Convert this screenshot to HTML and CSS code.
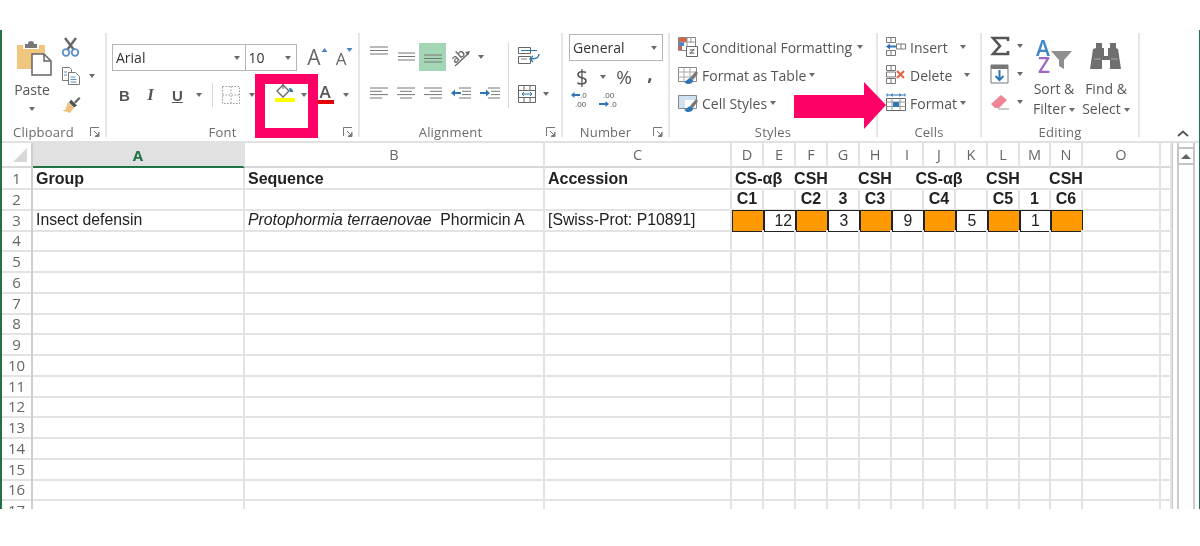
FILE: index.html
```html
<!DOCTYPE html>
<html lang="en">
<head>
<meta charset="utf-8">
<title>Excel ribbon</title>
<link rel="stylesheet" href="styles.css">
</head>
<body>
<div class="window">
  <div class="ribbon">

    <section class="group g-clipboard">
      <div class="body">
        <div class="paste">
          <svg class="ic36" viewBox="0 0 36 36"><path d="M0 5h6v4h16V5h6v24H0z" fill="#f0c67f"/><path d="M8 4h3a3 3 0 0 1 6 0h3v4H8z" fill="#777"/><path d="M15 14h12l7 7v14H15z" fill="#fff" stroke="#666" stroke-width="1.5"/><path d="M27 14v7h7" fill="none" stroke="#666" stroke-width="1.5"/></svg>
          <span class="paste-text">Paste</span>
          <span class="caret"></span>
        </div>
        <div class="tools">
          <div class="tool"><svg class="ic20" viewBox="0 0 20 20"><path d="M4 1l9 12M15 1L6 13" stroke="#666" stroke-width="2.4" fill="none"/><circle cx="5" cy="15.500" r="3.300" fill="none" stroke="#5b8fc7" stroke-width="1.800"/><circle cx="14" cy="15.500" r="3.300" fill="none" stroke="#5b8fc7" stroke-width="1.800"/></svg></div>
          <div class="tool"><svg class="ic20" viewBox="0 0 20 20"><path d="M1.500 1.500h7l2 2v11h-9z" fill="#fff" stroke="#777"/><path d="M7.500 6.500h7l4 4v8h-11z" fill="#fff" stroke="#777"/><path d="M3 6h3M3 9h3M9.500 11h5M9.500 13.500h6M9.500 16h6" stroke="#5b8fc7"/></svg><span class="caret tool-caret"></span></div>
          <div class="tool"><svg class="ic20" viewBox="0 0 20 20"><path d="M13 7l5-5 1.500 1.500-5 5z" fill="#666"/><path d="M10 4.500l6 6-3 2-5-5z" fill="#555"/><path d="M7 7l6 6-4 5-8-2.500c3 0 4-1 4-2.500z" fill="#eec27e"/></svg></div>
        </div>
      </div>
      <div class="label"><span class="label-text">Clipboard</span><svg class="launcher" viewBox="0 0 10 10"><path d="M.5 9V.5H9M9 5v4.500H5M4 4l4.500 4.500M8.500 5.500v3h-3" fill="none" stroke="#777"/></svg></div>
    </section>

    <section class="group g-font">
      <div class="body column">
        <div class="font-row1">
          <div class="combo combo-font"><span>Arial</span><span class="caret"></span></div>
          <div class="combo combo-size"><span>10</span><span class="caret"></span></div>
          <div class="slot s27 grow"><span class="big-a">A</span><svg class="tri" viewBox="0 0 6 4"><path d="M0 4l3-4 3 4z" fill="#4a86c5"/></svg></div>
          <div class="slot s27 grow"><span class="small-a">A</span><svg class="tri" viewBox="0 0 6 4"><path d="M0 0l3 4 3-4z" fill="#4a86c5"/></svg></div>
        </div>
        <div class="font-row2">
          <div class="slot s25 fmt bold">B</div>
          <div class="slot s27 fmt ital">I</div>
          <div class="slot s27 fmt under">U</div>
          <div class="slot s16"><span class="caret"></span></div>
          <div class="slot s10"><span class="vsep"></span></div>
          <div class="slot s28"><svg class="ic18" viewBox="0 0 18 18"><path d="M.5.500h17v17H.5zM9 .5v17M.5 9h17" fill="none" stroke="#999" stroke-dasharray="1.500 1.500"/></svg></div>
          <div class="slot s13"><span class="caret"></span></div>
          <div class="slot s14"></div>
          <div class="slot s26 fill-slot"><svg class="ic20" viewBox="0 0 20 20"><path d="M8 2l-6 6 6 6 6-6z" fill="#fff" stroke="#666" stroke-width="1.300"/><path d="M8 1v5" stroke="#666"/><path d="M14 5c3 0 4 2 4 4h-3z" fill="#2f75b5"/><rect x="0" y="15" width="20" height="4" fill="#ffff00"/></svg></div>
          <div class="slot s12"><span class="caret"></span></div>
          <div class="slot s30 font-color"><span class="color-a">A</span><span class="color-bar"></span></div>
          <div class="slot s12"><span class="caret"></span></div>
        </div>
      </div>
      <div class="label"><span class="label-text">Font</span><svg class="launcher" viewBox="0 0 10 10"><path d="M.5 9V.5H9M9 5v4.500H5M4 4l4.500 4.500M8.500 5.500v3h-3" fill="none" stroke="#777"/></svg></div>
    </section>

    <section class="group g-align">
      <div class="body">
        <div class="align-left">
          <div class="align-row1">
            <div class="slot s27 v-top"><svg class="ic18w" viewBox="0 0 18 10"><path d="M0 1h18M0 4.500h18M0 8h18" stroke="#777"/></svg></div>
            <div class="slot s27 v-mid"><svg class="ic18w" viewBox="0 0 18 10"><path d="M1 1h17M1 4.500h17M1 8h17" stroke="#777"/></svg></div>
            <div class="slot s27 active v-bot"><svg class="ic18w" viewBox="0 0 18 10"><path d="M0 1h18M0 4.500h18M0 8h18" stroke="#777"/></svg></div>
            <div class="slot s30"><svg class="ic20 orient" viewBox="0 0 20 20"><path d="M4 19L18 6" stroke="#666" stroke-width="1.300"/><path d="M19 4l-5 1 3 3.500z" fill="#666"/><text x="0" y="14" class="ab" transform="rotate(-42 6 10)">ab</text></svg></div>
            <div class="slot s10"><span class="caret"></span></div>
          </div>
          <div class="align-row2">
            <div class="slot s27"><svg class="ic18w" viewBox="0 0 18 12"><path d="M0 1h18M0 4.300h12M0 7.600h18M0 11h12" stroke="#777"/></svg></div>
            <div class="slot s27"><svg class="ic18w" viewBox="0 0 18 12"><path d="M0 1h18M3 4.300h12M0 7.600h18M3 11h12" stroke="#777"/></svg></div>
            <div class="slot s27"><svg class="ic18w" viewBox="0 0 18 12"><path d="M0 1h18M6 4.300h12M0 7.600h18M6 11h12" stroke="#777"/></svg></div>
            <div class="slot s30"><svg class="ic20w" viewBox="0 0 20 12"><path d="M8 1h12M11 4.300h9M11 7.600h9M8 11h12" stroke="#777"/><path d="M0 6l4-3.500v2.500h6v2H4v2.500z" fill="#2f75b5"/></svg></div>
            <div class="slot s28"><svg class="ic20w" viewBox="0 0 20 12"><path d="M8 1h12M11 4.300h9M11 7.600h9M8 11h12" stroke="#777"/><path d="M10 6L6 2.500V5H0v2h6v2.500z" fill="#2f75b5"/></svg></div>
          </div>
        </div>
        <span class="vsep tall"></span>
        <div class="align-right">
          <svg class="ic20 wrap" viewBox="0 0 24 20"><path d="M.5.500h12v6H.5zM.5 9.500h12v7H.5z" fill="#fff" stroke="#666"/><path d="M3 3.500h16" stroke="#2f75b5"/><path d="M3 12h6" stroke="#777"/><path d="M21 7c0 4-3 5-8 5M15 9l-3 3 3 3" fill="none" stroke="#2f75b5" stroke-width="1.300"/></svg>
          <div class="merge"><svg class="ic18" viewBox="0 0 18 18"><path d="M.5.500h17v17H.5zM.5 5.500h17M.5 12.500h17M6 .5v5M12 .5v5M6 12.500v5M12 12.500v5" fill="#fff" stroke="#666"/><path d="M4 9h10M4 9l2-2M4 9l2 2M14 9l-2-2M14 9l-2 2" fill="none" stroke="#2f75b5"/></svg><span class="caret"></span></div>
        </div>
      </div>
      <div class="label"><span class="label-text">Alignment</span><svg class="launcher" viewBox="0 0 10 10"><path d="M.5 9V.5H9M9 5v4.500H5M4 4l4.500 4.500M8.500 5.500v3h-3" fill="none" stroke="#777"/></svg></div>
    </section>

    <section class="group g-number">
      <div class="body column">
        <div class="combo combo-num"><span>General</span><span class="caret"></span></div>
        <div class="num-row">
          <div class="slot s26 num-sym dollar">$</div>
          <div class="slot s15"><span class="caret"></span></div>
          <div class="slot s28 num-sym percent">%</div>
          <div class="slot s24 num-sym comma">,</div>
        </div>
        <div class="num-row2">
          <svg class="dec" viewBox="0 0 20 18"><text x="9" y="7" class="dec-t">.0</text><text x="4" y="16" class="dec-t">.00</text><path d="M0 4l3.500-3v2H9v2H3.500v2z" fill="#2f75b5"/></svg>
          <svg class="dec" viewBox="0 0 20 18"><text x="5" y="7" class="dec-t">.00</text><text x="12" y="16" class="dec-t">.0</text><path d="M11 13L7.500 10v2H1v2h6.500v2z" fill="#2f75b5"/></svg>
        </div>
      </div>
      <div class="label"><span class="label-text">Number</span><svg class="launcher" viewBox="0 0 10 10"><path d="M.5 9V.5H9M9 5v4.500H5M4 4l4.500 4.500M8.500 5.500v3h-3" fill="none" stroke="#777"/></svg></div>
    </section>

    <section class="group g-styles">
      <div class="body column list">
        <div class="item"><svg class="ic20" viewBox="0 0 20 20"><path d="M.5.500h17v13H.5z" fill="#fff" stroke="#888"/><path d="M1 1h8v4H1z" fill="#d9603f"/><path d="M1 5h5v4H1z" fill="#4a86c5"/><path d="M1 9h3v4H1z" fill="#d9603f"/><path d="M9 1v12M13 1v5M1 5h16" stroke="#999"/><path d="M8.500 9.500h11v10h-11z" fill="#fff" stroke="#666"/><path d="M11.500 13h5M11.500 16h5M16 12l-4 5" stroke="#555"/></svg><span>Conditional Formatting</span><span class="caret ml5"></span></div>
        <div class="item"><svg class="ic20" viewBox="0 0 20 20"><path d="M.5 2.500h18v14H.5z" fill="#fff" stroke="#888"/><path d="M.5 7h18M.5 12h18M6 2.500v14M12 2.500v14" stroke="#aaa"/><path d="M18 6l-6 7 3 2 5-7z" fill="#777"/><path d="M12 13c-3 1-3 3-6 4l3 2c4 0 6-1 6-4z" fill="#2f75b5"/></svg><span>Format as Table</span><span class="caret ml3"></span></div>
        <div class="item"><svg class="ic20" viewBox="0 0 20 20"><path d="M.5 2.500h18v13H.5z" fill="#fff" stroke="#888"/><path d="M1 3h17v4H1z" fill="#cfe0f0"/><path d="M1 7h6v8H1z" fill="#cfe0f0"/><path d="M18 6l-6 7 3 2 5-7z" fill="#777"/><path d="M12 13c-3 1-3 3-6 4l3 2c4 0 6-1 6-4z" fill="#2f75b5"/></svg><span>Cell Styles</span><span class="caret ml3"></span></div>
      </div>
      <div class="label label-plain"><span class="label-text">Styles</span></div>
    </section>

    <section class="group g-cells">
      <div class="body column list">
        <div class="item tight"><svg class="ic20" viewBox="0 0 20 20"><path d="M.5.500h9v5h-9zM.5 13.500h9v5h-9zM5 .5v5M5 13.500v5M10.500 7h9v5h-9zM15 7v5" fill="#fff" stroke="#777"/><path d="M0 9.500l4-3v2h6v2H4v2z" fill="#2f75b5"/></svg><span>Insert</span><span class="caret ml12"></span></div>
        <div class="item tight"><svg class="ic20" viewBox="0 0 20 20"><path d="M.5.500h9v5h-9zM.5 13.500h9v5h-9zM5 .5v5M5 13.500v5M.5 7h9v5h-9z" fill="#fff" stroke="#777"/><path d="M11 6l7 7M18 6l-7 7" stroke="#e2613f" stroke-width="2"/></svg><span>Delete</span><span class="caret ml12"></span></div>
        <div class="item tight"><svg class="ic20" viewBox="0 0 20 20"><path d="M1 2h18M1 .5v3M19 .5v3M5 2l2-1.300M5 2l2 1.300M15 2l-2-1.300M15 2l-2 1.300" fill="none" stroke="#2f75b5"/><path d="M.5 5.500h19v12H.5z" fill="#fff" stroke="#666"/><path d="M.5 9h19M.5 13.500h19M6 5.500v12M14 5.500v12" stroke="#999"/><path d="M7 9h6v5H7z" fill="#2f75b5"/></svg><span>Format</span><span class="caret ml3"></span></div>
      </div>
      <div class="label label-plain"><span class="label-text">Cells</span></div>
    </section>

    <section class="group g-editing">
      <div class="body">
        <div class="edit-list">
          <div class="edit-item"><svg class="ic20 sigma" viewBox="0 0 20 20"><path d="M18 5V2H3l7 8-7 8h15v-3" fill="none" stroke="#555" stroke-width="2.600"/></svg><span class="caret"></span></div>
          <div class="edit-item"><svg class="ic20" viewBox="0 0 20 20"><path d="M1 1h17v18H1z" fill="#fff" stroke="#777"/><path d="M1 1h17v4H1z" fill="#777"/><path d="M9.500 6v10M5.500 12l4 4 4-4" fill="none" stroke="#2f75b5" stroke-width="2"/></svg><span class="caret"></span></div>
          <div class="edit-item"><svg class="ic20" viewBox="0 0 20 20"><path d="M1 12L11 3l6 5-8 8H5z" fill="#ee8494"/><path d="M8 17h11" stroke="#999"/></svg><span class="caret"></span></div>
        </div>
        <div class="big-btn">
          <svg class="sort-ic" viewBox="0 0 36 34"><text x="0" y="16" class="az az-a">A</text><text x="2" y="33" class="az az-z">Z</text><path d="M15 11h21l-8 9v9l-5-3v-6z" fill="#8f8f8f"/></svg>
          <span>Sort &amp;</span>
          <span>Filter<span class="caret ml3"></span></span>
        </div>
        <div class="big-btn">
          <svg class="find-ic" viewBox="0 0 32 30"><path d="M6 2h6v5h2v8h4V7h2V2h6v5l2 1 3 20H20V19h-8v9H0L3 8l3-1z" fill="#6f6f6f"/><path d="M4 18h7M21 18h7" stroke="#aaa"/></svg>
          <span>Find &amp;</span>
          <span>Select<span class="caret ml3"></span></span>
        </div>
      </div>
      <div class="label label-plain"><span class="label-text">Editing</span></div>
    </section>

    <div class="collapse"><svg class="chev" viewBox="0 0 12 7"><path d="M1 6l5-4.500L11 6" fill="none" stroke="#555" stroke-width="1.800"/></svg></div>
  </div>

  <div class="sheet">
    <div class="cells">
      <div class="row head">
        <span class="rh corner"><svg class="corner-tri" viewBox="0 0 14 14"><path d="M14 0v14H0z" fill="#d8d8d8"/></svg></span>
        <span class="sel">A</span><span>B</span><span>C</span><span>D</span><span>E</span><span>F</span><span>G</span><span>H</span><span>I</span><span>J</span><span>K</span><span>L</span><span>M</span><span>N</span><span>O</span><span></span>
      </div>
      <div class="row r-title">
        <span class="rh">1</span>
        <span class="b">Group</span><span class="b">Sequence</span><span class="b">Accession</span>
        <span class="b nl">CS-αβ</span><span class="nl"></span>
        <span class="b ctr nl">CSH</span><span class="nl"></span>
        <span class="b ctr nl">CSH</span><span class="nl"></span>
        <span class="b ctr nl">CS-αβ</span><span class="nl"></span>
        <span class="b ctr nl">CSH</span><span class="nl"></span>
        <span class="b ctr nl">CSH</span><span></span><span></span>
      </div>
      <div class="row">
        <span class="rh">2</span><span></span><span></span><span></span>
        <span class="b ctr">C1</span><span></span><span class="b ctr">C2</span><span class="b ctr">3</span><span class="b ctr">C3</span><span></span><span class="b ctr">C4</span><span></span><span class="b ctr">C5</span><span class="b ctr">1</span><span class="b ctr">C6</span><span></span><span></span>
      </div>
      <div class="row">
        <span class="rh">3</span>
        <span>Insect defensin</span><span><em>Protophormia terraenovae</em>&nbsp; Phormicin A</span><span>[Swiss-Prot: P10891]</span>
        <span class="box or"></span><span class="box num">12</span><span class="box or"></span><span class="box ctr">3</span><span class="box or"></span><span class="box ctr">9</span><span class="box or"></span><span class="box ctr">5</span><span class="box or"></span><span class="box ctr">1</span><span class="box or"></span><span></span><span></span>
      </div>
      <div class="row"><span class="rh">4</span><span></span><span></span><span></span><span></span><span></span><span></span><span></span><span></span><span></span><span></span><span></span><span></span><span></span><span></span><span></span><span></span></div>
      <div class="row"><span class="rh">5</span><span></span><span></span><span></span><span></span><span></span><span></span><span></span><span></span><span></span><span></span><span></span><span></span><span></span><span></span><span></span><span></span></div>
      <div class="row"><span class="rh">6</span><span></span><span></span><span></span><span></span><span></span><span></span><span></span><span></span><span></span><span></span><span></span><span></span><span></span><span></span><span></span><span></span></div>
      <div class="row"><span class="rh">7</span><span></span><span></span><span></span><span></span><span></span><span></span><span></span><span></span><span></span><span></span><span></span><span></span><span></span><span></span><span></span><span></span></div>
      <div class="row"><span class="rh">8</span><span></span><span></span><span></span><span></span><span></span><span></span><span></span><span></span><span></span><span></span><span></span><span></span><span></span><span></span><span></span><span></span></div>
      <div class="row"><span class="rh">9</span><span></span><span></span><span></span><span></span><span></span><span></span><span></span><span></span><span></span><span></span><span></span><span></span><span></span><span></span><span></span><span></span></div>
      <div class="row"><span class="rh">10</span><span></span><span></span><span></span><span></span><span></span><span></span><span></span><span></span><span></span><span></span><span></span><span></span><span></span><span></span><span></span><span></span></div>
      <div class="row"><span class="rh">11</span><span></span><span></span><span></span><span></span><span></span><span></span><span></span><span></span><span></span><span></span><span></span><span></span><span></span><span></span><span></span><span></span></div>
      <div class="row"><span class="rh">12</span><span></span><span></span><span></span><span></span><span></span><span></span><span></span><span></span><span></span><span></span><span></span><span></span><span></span><span></span><span></span><span></span></div>
      <div class="row"><span class="rh">13</span><span></span><span></span><span></span><span></span><span></span><span></span><span></span><span></span><span></span><span></span><span></span><span></span><span></span><span></span><span></span><span></span></div>
      <div class="row"><span class="rh">14</span><span></span><span></span><span></span><span></span><span></span><span></span><span></span><span></span><span></span><span></span><span></span><span></span><span></span><span></span><span></span><span></span></div>
      <div class="row"><span class="rh">15</span><span></span><span></span><span></span><span></span><span></span><span></span><span></span><span></span><span></span><span></span><span></span><span></span><span></span><span></span><span></span><span></span></div>
      <div class="row"><span class="rh">16</span><span></span><span></span><span></span><span></span><span></span><span></span><span></span><span></span><span></span><span></span><span></span><span></span><span></span><span></span><span></span><span></span></div>
      <div class="row"><span class="rh">17</span><span></span><span></span><span></span><span></span><span></span><span></span><span></span><span></span><span></span><span></span><span></span><span></span><span></span><span></span><span></span><span></span></div>
    </div>
    <div class="scrollbar"><div class="scroll-up"><span class="up-tri"></span></div></div>
  </div>

  <div class="highlight"></div>
  <svg class="arrow" viewBox="0 0 92 48"><path d="M0 13h70V0l22 23-22 24V36H0z" fill="#ff0066"/></svg>
</div>
</body>
</html>
```

FILE: styles.css
```css
* { box-sizing: border-box; }
html, body { margin: 0; background: #fff; }
body { padding-top: 30px; height: 546px; overflow: hidden; font-family: "Open Sans", "Noto Sans", sans-serif; color: #444; }

.window {
  position: relative;
  width: 1200px;
  height: 479px;
  border-left: 2px solid #217346;
  border-right: 1px solid #217346;
  overflow: hidden;
  filter: blur(0.35px);
}

/* ribbon */
.ribbon { display: flex; height: 113px; padding-top: 3px; border-bottom: 2px solid #e1e1e1; }
.group { display: flex; flex-direction: column; height: 104px; border-right: 2px solid #e6e6e6; }
.body { display: flex; flex: 1; min-height: 0; }
.column { flex-direction: column; }
.label { display: flex; align-items: center; height: 17px; margin-bottom: -3px; font-size: 13px; color: #6a6a6a; flex: none; }
.label-text { flex: 1; text-align: center; letter-spacing: .2px; }
.launcher { width: 10px; height: 10px; margin: 0 5px; flex: none; }

.g-clipboard { width: 105px; }
.g-font { width: 253px; }
.g-align { width: 203px; }
.g-number { width: 107px; }
.g-styles { width: 208px; }
.g-cells { width: 104px; }
.g-editing { width: 158px; }

.caret { display: inline-block; width: 0; height: 0; border: 3.500px solid transparent; border-top: 4px solid #6b6b6b; border-bottom: 0; flex: none; vertical-align: middle; }
.ml3 { margin-left: 3px; }
.ml5 { margin-left: 5px; }
.ml12 { margin-left: 12px; }

.slot { display: flex; align-items: center; justify-content: center; flex: none; height: 100%; }
.s10 { width: 10px; } .s12 { width: 12px; } .s13 { width: 13px; } .s14 { width: 14px; } .s15 { width: 15px; } .s16 { width: 16px; } .s24 { width: 24px; } .s25 { width: 25px; } .s26 { width: 26px; } .s27 { width: 27px; } .s28 { width: 28px; } .s30 { width: 30px; }

.ic18 { width: 18px; height: 18px; display: block; flex: none; }
.ic20 { width: 20px; height: 20px; display: block; flex: none; }
.ic36 { width: 36px; height: 36px; display: block; flex: none; }
.ic18w { width: 18px; display: block; flex: none; }
.ic20w { width: 20px; display: block; flex: none; }

/* clipboard */
.paste { display: flex; flex-direction: column; align-items: center; width: 40px; margin-left: 10px; padding-top: 7px; }
.paste .ic36 { margin-left: 6px; }
.paste-text { font-size: 14px; line-height: 20px; margin-top: 4px; color: #555; }
.paste .caret { margin-top: 7px; }
.tools { display: flex; flex-direction: column; gap: 9px; padding: 4px 0 0 9px; }
.tool { display: flex; align-items: center; height: 20px; }
.tool-caret { margin-left: 8px; }

/* font */
.font-row1 { display: flex; align-items: stretch; height: 27px; margin: 11px 0 0 5px; }
.combo { display: flex; align-items: center; justify-content: space-between; border: 1px solid #b5b5b5; background: #fff; padding: 0 5px 0 3px; color: #333; font-size: 14px; }
.combo-font { width: 135px; }
.combo-size { width: 53px; margin-left: -1px; margin-right: 7px; }
.grow { align-items: flex-end; padding-bottom: 2px; color: #666; }
.big-a { font-size: 21px; line-height: 24px; }
.small-a { font-size: 17px; line-height: 20px; }
.tri { width: 7px; height: 4px; margin: 0 0 17px 0; }
.font-row2 { display: flex; height: 24px; margin: 12px 0 0 5px; }
.fmt { font-size: 15px; color: #555; font-family: "Liberation Sans", sans-serif; }
.bold { font-weight: 700; }
.ital { font-style: italic; font-family: "Liberation Serif", serif; font-size: 17px; font-weight: 700; }
.under { font-weight: 700; text-decoration: underline; }
.vsep { display: block; width: 1px; height: 24px; background: #d8d8d8; }
.fill-slot { align-items: flex-start; }
.font-color { flex-direction: column; justify-content: flex-start; }
.color-a { font-size: 17px; line-height: 17px; color: #555; font-weight: 600; }
.color-bar { width: 17px; height: 4px; background: #e60000; }

/* alignment */
.align-left { display: flex; flex-direction: column; width: 143px; margin-left: 5px; padding-top: 10px; }
.align-row1 { display: flex; height: 28px; }
.align-row2 { display: flex; height: 14px; margin-top: 15px; }
.active { background: #a3d6b5; }
.v-top { align-items: flex-start; padding-top: 3px; }
.v-mid { align-items: center; }
.v-bot { align-items: flex-end; padding-bottom: 7px; }
.orient { overflow: visible; }
.ab { font-size: 12px; font-weight: 600; fill: #666; font-family: "Open Sans", sans-serif; }
.vsep.tall { height: 66px; margin-top: 9px; flex: none; }
.align-right { display: flex; flex-direction: column; align-items: flex-start; padding: 14px 0 0 9px; }
.wrap { width: 24px; }
.merge { display: flex; align-items: center; gap: 7px; margin-top: 18px; }

/* number */
.combo-num { width: 94px; height: 27px; margin: 1px 0 0 6px; }
.num-row { display: flex; height: 26px; margin: 3px 0 0 6px; }
.num-sym { color: #555; font-size: 21px; }
.percent { font-size: 19px; }
.comma { font-weight: 700; font-size: 19px; padding-bottom: 8px; }
.num-row2 { display: flex; gap: 7px; margin: 1px 0 0 8px; }
.dec { width: 20px; height: 18px; display: block; overflow: visible; }
.dec-t { font-size: 8px; fill: #555; font-family: "Liberation Sans", sans-serif; }

/* styles + cells */
.list { padding-left: 8px; }
.item { display: flex; align-items: center; height: 28px; font-size: 14px; color: #555; white-space: nowrap; }
.item > svg { margin-right: 4px; }
.tight > svg { margin-right: 4px; }

/* editing */
.edit-list { display: flex; flex-direction: column; width: 46px; padding: 3px 0 0 8px; gap: 8px; }
.edit-item { display: flex; align-items: center; gap: 7px; height: 20px; }
.big-btn { display: flex; flex-direction: column; align-items: center; width: 52px; font-size: 14px; line-height: 20px; color: #555; white-space: nowrap; }
.sort-ic { width: 36px; height: 34px; margin-top: 7px; margin-bottom: 5px; display: block; overflow: visible; }
.find-ic { width: 32px; height: 30px; margin-top: 8px; margin-bottom: 8px; display: block; }
.az { font-size: 21px; font-weight: 600; font-family: "Open Sans", sans-serif; }
.az-a { fill: #3f86c9; }
.az-z { fill: #a265c4; }

.collapse { margin-left: auto; margin-right: 10px; align-self: flex-end; padding-bottom: 4px; }
.chev { width: 12px; height: 7px; display: block; }

/* sheet */
.sheet { display: flex; height: 366px; }
.cells { width: 1171px; border-right: 1px solid #c8c8c8; }
.row {
  display: grid;
  grid-template-columns: 31px 212px 300px 187px 32px 32px 32px 32px 32px 32px 32px 32px 32px 31px 32px 78px 1fr;
  height: 20.750px;
  font-family: "Liberation Sans", Arial, sans-serif;
  font-size: 15.800px;
  color: #222;
}
.row > span { display: flex; align-items: center; padding-left: 3px; padding-top: 1px; border-right: 2px solid #e3e3e3; border-bottom: 2px solid #e3e3e3; white-space: nowrap; min-width: 0; }
.row > .rh { justify-content: center; padding: 0; color: #666; font-family: "Open Sans", sans-serif; font-size: 15px; border-right: 2px solid #cfcfcf; }
.row.head { height: 25px; }
.row.head > span { justify-content: center; padding: 0; color: #666; font-family: "Open Sans", sans-serif; font-size: 14.500px; border-bottom: 2px solid #d8d8d8; }
.row.head > .sel { background: #e1e1e1; color: #217346; font-weight: 700; font-size: 15px; border-bottom: 2px solid #217346; border-right-color: #e1e1e1; }
.row.head > .corner { align-items: flex-end; justify-content: flex-end; padding: 0 4px 4px 0; border-right: 2px solid #cfcfcf; }
.corner-tri { width: 14px; height: 14px; display: block; }
.row > .b { font-weight: 700; font-size: 16px; }
.row > .ctr { justify-content: center; padding-left: 0; }
.row > .nl { border-right-color: transparent; }
.row > .box { border: 0; outline: 1px solid #222; outline-offset: -1px; }
.or { background: #ff9900; }
.row > .num { justify-content: flex-end; padding: 1px 4px 0 0; }

.scrollbar { flex: 1; margin: 0 4px; border-left: 2px solid #ccc; border-right: 2px solid #ccc; }
.scroll-up { display: flex; align-items: center; justify-content: center; height: 18px; margin: 4px -2px 0; border: 2px solid #c4c4c4; background: #fff; }
.up-tri { width: 0; height: 0; border: 5px solid transparent; border-bottom: 5px solid #666; border-top: 0; }

/* annotations laid over the screenshot */
.highlight { position: absolute; left: 253px; top: 44px; width: 63px; height: 64px; border: 10px solid #ff0066; }
.arrow { position: absolute; left: 792px; top: 52px; width: 92px; height: 48px; }
```
